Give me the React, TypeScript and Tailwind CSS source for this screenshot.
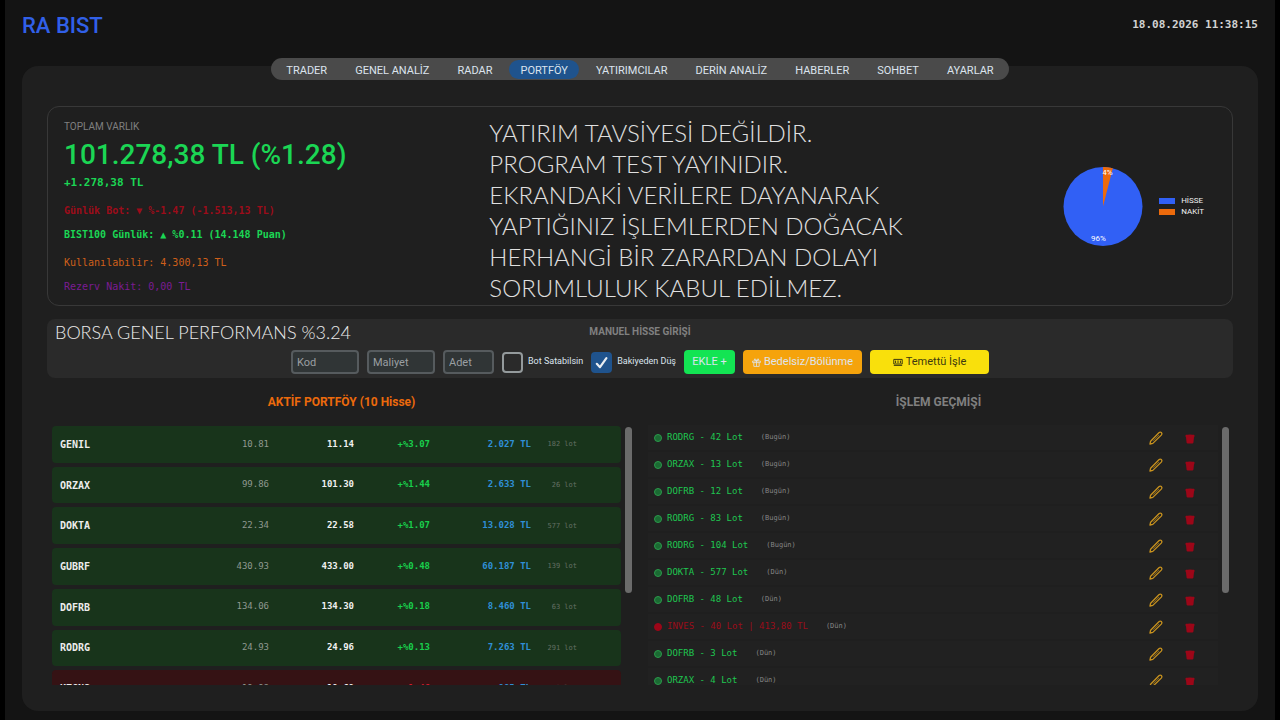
import { useState } from "react";
import { clsx } from "clsx";

const tabs = [
  "TRADER",
  "GENEL ANALİZ",
  "RADAR",
  "PORTFÖY",
  "YATIRIMCILAR",
  "DERİN ANALİZ",
  "HABERLER",
  "SOHBET",
  "AYARLAR",
];

const holdings = [
  { code: "GENIL", cost: "10.81", price: "11.14", change: "+%3.07", value: "2.027 TL", lot: "182 lot" },
  { code: "ORZAX", cost: "99.86", price: "101.30", change: "+%1.44", value: "2.633 TL", lot: "26 lot" },
  { code: "DOKTA", cost: "22.34", price: "22.58", change: "+%1.07", value: "13.028 TL", lot: "577 lot" },
  { code: "GUBRF", cost: "430.93", price: "433.00", change: "+%0.48", value: "60.187 TL", lot: "139 lot" },
  { code: "DOFRB", cost: "134.06", price: "134.30", change: "+%0.18", value: "8.460 TL", lot: "63 lot" },
  { code: "RODRG", cost: "24.93", price: "24.96", change: "+%0.13", value: "7.263 TL", lot: "291 lot" },
  { code: "KZGNS", cost: "19.98", price: "19.69", change: "%-1.46", value: "985 TL", lot: "50 lot", loss: true },
];

const trades = [
  { text: "RODRG - 42 Lot", day: "(Bugün)" },
  { text: "ORZAX - 13 Lot", day: "(Bugün)" },
  { text: "DOFRB - 12 Lot", day: "(Bugün)" },
  { text: "RODRG - 83 Lot", day: "(Bugün)" },
  { text: "RODRG - 104 Lot", day: "(Bugün)" },
  { text: "DOKTA - 577 Lot", day: "(Dün)" },
  { text: "DOFRB - 48 Lot", day: "(Dün)" },
  { text: "INVES - 40 Lot | 413,80 TL", day: "(Dün)", sell: true },
  { text: "DOFRB - 3 Lot", day: "(Dün)" },
  { text: "ORZAX - 4 Lot", day: "(Dün)" },
];

const disclaimer = [
  "YATIRIM TAVSİYESİ DEĞİLDİR.",
  "PROGRAM TEST YAYINIDIR.",
  "EKRANDAKİ VERİLERE DAYANARAK",
  "YAPTIĞINIZ İŞLEMLERDEN DOĞACAK",
  "HERHANGİ BİR ZARARDAN DOLAYI",
  "SORUMLULUK KABUL EDİLMEZ.",
];

function PencilIcon() {
  return (
    <svg viewBox="0 0 14 14" className="size-[14px]" fill="none" stroke="#c8921e" strokeWidth="1.3" strokeLinejoin="round" strokeLinecap="round" aria-hidden="true">
      <path d="M1 13 L1.6 10.2 L9.9 1.7 Q11.2 0.6 12.4 1.6 Q13.4 2.8 12.3 4.1 L3.8 12.4 Z" />
      <path d="M4.6 9.5 L9.8 4.3" strokeWidth="0.6" />
    </svg>
  );
}

function TrashIcon() {
  return (
    <svg viewBox="0 0 10 10" className="size-[10px]" fill="#9c0618" aria-hidden="true">
      <path d="M0.5 1.4 Q0.5 0.8 1.2 0.8 L2.6 0.8 Q5 0.2 7.4 0.8 L8.8 0.8 Q9.5 0.8 9.5 1.4 L9.4 2.8 L9 3.4 L8.4 8.8 Q8.2 9.6 7.4 9.6 L2.6 9.6 Q1.8 9.6 1.6 8.8 L1 3.4 L0.6 2.8 Z" />
    </svg>
  );
}

function GiftIcon() {
  return (
    <svg viewBox="0 0 9 9" className="size-[9px]" fill="none" stroke="currentColor" strokeWidth="0.8" aria-hidden="true">
      <path d="M0.6 3 H8.4 V4.6 H0.6 Z M1.8 4.6 V8.4 H7.2 V4.6 M4.5 3 V8.4 M4.5 3 Q1.6 2.4 2.4 1 Q3.6 0.1 4.5 3 Q5.4 0.1 6.6 1 Q7.4 2.4 4.5 3" />
    </svg>
  );
}

function CashIcon() {
  return (
    <svg viewBox="0 0 10 8" className="h-[8px] w-[10px]" fill="none" stroke="currentColor" strokeWidth="1" aria-hidden="true">
      <path d="M0.8 1.4 H9.2 V6 H0.8 Z M0.8 7.4 H9.2" />
      <path d="M2.6 2.6 V5 M5 2.4 V5.2 M7.4 2.6 V5" />
    </svg>
  );
}

function PieChart() {
  return (
    <svg viewBox="0 0 80 80" className="size-[80px]" role="img" aria-label="HİSSE 96%, NAKİT 4%">
      <circle cx="40" cy="40.5" r="39.5" fill="#3160f5" />
      <path d="M40 40.5 L40 1 A39.5 39.5 0 0 1 49.8 2.2 Z" fill="#ec6a0c" />
      <text x="44.5" y="9" textAnchor="middle" fontSize="8" fill="#fff">4%</text>
      <text x="35.5" y="75" textAnchor="middle" fontSize="8" fill="#fff">96%</text>
    </svg>
  );
}

function CheckField({ id, label, initial }: { id: string; label: string; initial: boolean }) {
  const [checked, setChecked] = useState(initial);
  return (
    <div className="flex items-center gap-[5px]">
      <span className="relative flex size-[21px]">
        <input
          id={id}
          type="checkbox"
          checked={checked}
          onChange={(e) => setChecked(e.target.checked)}
          className="size-full appearance-none rounded-[4px] border-2 border-[#949a9c] checked:border-[#1f538d] checked:bg-[#1f538d]"
        />
        {checked && (
          <svg viewBox="0 0 21 21" className="pointer-events-none absolute inset-0" fill="none" stroke="#e8edf2" strokeWidth="2.2" strokeLinecap="round" strokeLinejoin="round" aria-hidden="true">
            <path d="M5.8 11.8 L9 15.2 L15.4 6.2" />
          </svg>
        )}
      </span>
      <label htmlFor={id} className="text-[9px] whitespace-nowrap text-[#dce4ee]">
        {label}
      </label>
    </div>
  );
}

const inputClass =
  "h-6 rounded-[4px] border-2 border-[#565b5e] bg-[#303536] px-1 text-[11px] text-[#dce4ee] outline-none placeholder:text-[#9a9fa2]";

function HoldingsTable() {
  return (
    <table className="h-[289px] w-full table-fixed border-separate border-spacing-x-0 border-spacing-y-1 text-right font-['DejaVu_Sans_Mono',monospace] text-[9px]">
      <colgroup>
        <col />
        <col className="w-[100px]" />
        <col className="w-[85px]" />
        <col className="w-[76px]" />
        <col className="w-[101px]" />
        <col className="w-[46px]" />
        <col className="w-[44px]" />
      </colgroup>
      <tbody>
        {holdings.map((h) => (
          <tr key={h.code} className={h.loss ? "bg-[#351214]" : "bg-[#18341b]"}>
            <th scope="row" className="rounded-l-[4px] p-0 pl-2 text-left text-[10px] font-bold text-[#ececec]">
              {h.code}
            </th>
            <td className="p-0 text-[#8f988f]">{h.cost}</td>
            <td className="p-0 font-bold text-[#f0f0f0]">{h.price}</td>
            <td className={clsx("p-0 font-bold", h.loss ? "text-[#d01c2c]" : "text-[#18cf4c]")}>{h.change}</td>
            <td className="p-0 font-bold text-[#2f8fd6]">{h.value}</td>
            <td className="p-0 text-[7px] text-[#647064]">{h.lot}</td>
            <td className="rounded-r-[4px] p-0" />
          </tr>
        ))}
      </tbody>
    </table>
  );
}

function TradeList() {
  return (
    <ul className="flex flex-col font-['DejaVu_Sans_Mono',monospace] text-[9px]">
      {trades.map((t) => (
        <li key={t.text} className="flex h-[27px] items-center border-b-2 border-[#1f1f1f] bg-[#212121] pl-[6px]">
          <span
            className={clsx(
              "size-[8px] rounded-full border",
              t.sell ? "border-[#9c0618] bg-[#9c0618]" : "border-[#2b9a4b] bg-[#1b6a33]",
            )}
          />
          <span className={clsx("ml-[5px]", t.sell ? "text-[#9c0c1a]" : "text-[#1fc650]")}>{t.text}</span>
          <span className="ml-[18px] text-[7px] text-[#858585]">{t.day}</span>
          <button type="button" aria-label="Düzenle" className="ml-auto">
            <PencilIcon />
          </button>
          <button type="button" aria-label="Sil" className="mr-[23px] ml-[22px] pt-[3px]">
            <TrashIcon />
          </button>
        </li>
      ))}
    </ul>
  );
}

export default function App() {
  const [active, setActive] = useState("PORTFÖY");

  return (
    <div className="h-screen bg-black px-[5px] font-['Roboto',sans-serif] text-[11px] text-[#dce4ee]">
      <div className="flex h-full flex-col bg-[#141414] px-[17px] pb-[9px]">
        <header className="flex h-[58px] shrink-0 items-start justify-between">
          <h1 className="pt-3 text-[22px] leading-7 font-medium text-[#3160e8]">RA BIST</h1>
          <time className="pt-4 font-['DejaVu_Sans_Mono',monospace] leading-[18px] font-bold text-[#d2d2d2]">
            18.08.2026 11:38:15
          </time>
        </header>

        <nav className="z-10 flex h-[22px] shrink-0 items-center gap-[6px] self-center rounded-full bg-[#4a4a4a] px-1">
          {tabs.map((t) => (
            <button
              key={t}
              type="button"
              onClick={() => setActive(t)}
              className={clsx(
                "rounded-full px-[11px] pt-[2px] leading-[17px] whitespace-nowrap",
                t === active && "bg-[#1f538d]",
              )}
            >
              {t}
            </button>
          ))}
        </nav>

        <main className="-mt-[14px] flex min-h-0 flex-1 flex-col rounded-[16px] bg-[#1f1f1f] px-[25px] pt-10 pb-[26px]">
          <section className="grid h-[200px] shrink-0 grid-cols-[24fr_31fr_10fr] rounded-[12px] border border-[#383838] px-4">
            <div className="pt-3 font-['DejaVu_Sans_Mono',monospace] text-[10px]">
              <h2 className="font-['Roboto',sans-serif] leading-4 text-[#7f7f7f]">TOPLAM VARLIK</h2>
              <p className="font-['Roboto',sans-serif] text-[28px] leading-10 font-medium whitespace-nowrap text-[#1bd654]">
                101.278,38 TL (%1.28)
              </p>
              <p className="text-[11px] leading-4 font-bold text-[#1bd654]">+1.278,38 TL</p>
              <p className="mt-3 leading-4 font-bold text-[#9c0c1a]">Günlük Bot: ▼ %-1.47 (-1.513,13 TL)</p>
              <p className="mt-2 leading-4 font-bold text-[#1bd654]">BIST100 Günlük: ▲ %0.11 (14.148 Puan)</p>
              <p className="mt-3 leading-4 text-[#cf5f1a]">Kullanılabilir: 4.300,13 TL</p>
              <p className="mt-2 leading-4 text-[#7b1c93]">Rezerv Nakit: 0,00 TL</p>
            </div>
            <p className="pt-[10px] font-['Lato',sans-serif] text-[24px] leading-[31px] font-light whitespace-nowrap text-[#e0e0e0]">
              {disclaimer.map((line) => (
                <span key={line} className="block">
                  {line}
                </span>
              ))}
            </p>
            <div className="flex items-center justify-end gap-4 pr-3">
              <PieChart />
              <ul className="text-[8px] leading-[11px] text-[#f0f0f0]">
                <li className="flex items-center gap-[6px]">
                  <span className="h-[6px] w-4 bg-[#3160f5]" />
                  HİSSE
                </li>
                <li className="flex items-center gap-[6px]">
                  <span className="h-[6px] w-4 bg-[#ec6a0c]" />
                  NAKİT
                </li>
              </ul>
            </div>
          </section>

          <section className="relative mt-[13px] flex shrink-0 flex-col items-center rounded-[8px] bg-[#2a2a2a] pt-[6px] pb-1">
            <p className="absolute top-0 left-2 font-['Lato',sans-serif] text-[18px] leading-[26px] font-light text-[#ececec]">
              BORSA GENEL PERFORMANS %3.24
            </p>
            <h2 className="text-[10px] leading-[13px] font-bold text-[#808080]">MANUEL HİSSE GİRİŞİ</h2>
            <form className="mt-3 flex items-center gap-2" onSubmit={(e) => e.preventDefault()}>
              <input aria-label="Kod" placeholder="Kod" className={clsx(inputClass, "w-[68px]")} />
              <input aria-label="Maliyet" placeholder="Maliyet" className={clsx(inputClass, "w-[68px]")} />
              <input aria-label="Adet" placeholder="Adet" className={clsx(inputClass, "w-[51px]")} />
              <CheckField id="bot" label="Bot Satabilsin" initial={false} />
              <CheckField id="balance" label="Bakiyeden Düş" initial={true} />
              <button type="submit" className="h-6 w-[51px] rounded-[4px] bg-[#13e453]">
                EKLE +
              </button>
              <button type="button" className="flex h-6 w-[119px] items-center justify-center gap-[3px] rounded-[4px] bg-[#f5a30c]">
                <GiftIcon />
                Bedelsiz/Bölünme
              </button>
              <button type="button" className="flex h-6 w-[119px] items-center justify-center gap-[3px] rounded-[4px] bg-[#f9e00c] text-[#3d3a10]">
                <CashIcon />
                Temettü İşle
              </button>
            </form>
          </section>

          <div className="mt-4 grid min-h-0 flex-1 grid-cols-2 grid-rows-[minmax(0,1fr)] gap-2">
            <section className="flex min-h-0 flex-col">
              <h2 className="text-center text-[12px] leading-4 font-bold text-[#ec6a0c]">AKTİF PORTFÖY (10 Hisse)</h2>
              <div className="mt-3 flex min-h-0 flex-1 gap-1 pr-1 pl-[5px]">
                <div className="flex-1 overflow-y-auto [scrollbar-width:none]">
                  <HoldingsTable />
                </div>
                <div className="mt-[5px] h-[166px] w-[7px] rounded-full bg-[#6b6b6b]" />
              </div>
            </section>
            <section className="flex min-h-0 flex-col">
              <h2 className="text-center text-[12px] leading-4 font-bold text-[#808080]">İŞLEM GEÇMİŞİ</h2>
              <div className="mt-3 flex min-h-0 flex-1 gap-1 pr-1 pl-1">
                <div className="flex-1 overflow-y-auto pt-[3px] [scrollbar-width:none]">
                  <TradeList />
                </div>
                <div className="mt-[5px] h-[166px] w-[7px] rounded-full bg-[#6b6b6b]" />
              </div>
            </section>
          </div>
        </main>
      </div>
    </div>
  );
}
